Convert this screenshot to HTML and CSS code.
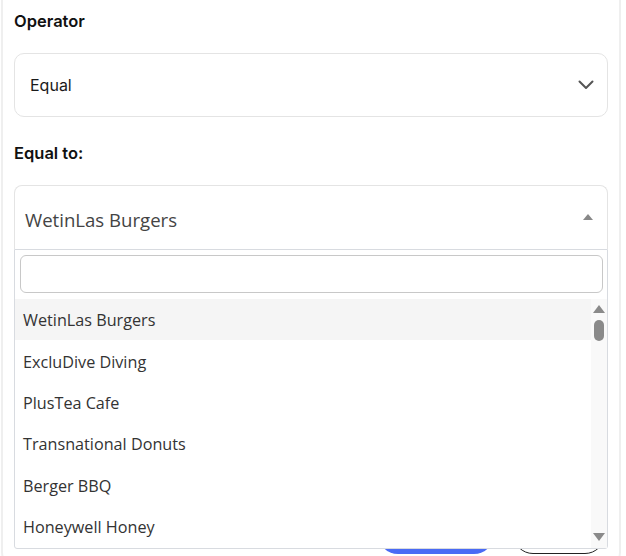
FILE: index.html
```html
<!DOCTYPE html>
<html>
<head>
<meta charset="utf-8">
<link rel="stylesheet" href="styles.css">
</head>
<body>
<div class="card">
  <div class="label">Operator</div>
  <div class="select">
    <span>Equal</span>
    <svg class="chev" width="16" height="10" viewBox="0 0 16 10"><path d="M1.5 1.5 L8 8 L14.5 1.5" fill="none" stroke="#555" stroke-width="2" stroke-linecap="round" stroke-linejoin="round"/></svg>
  </div>
  <div class="label label-2">Equal to:</div>
  <div class="combo">
    <div class="combo-box">
      <span>WetinLas Burgers</span>
      <span class="tri-up"></span>
    </div>
    <div class="dropdown">
      <div class="search-wrap"><input class="search" type="text"></div>
      <div class="list">
        <ul class="items">
          <li class="item active">WetinLas Burgers</li>
          <li class="item">ExcluDive Diving</li>
          <li class="item">PlusTea Cafe</li>
          <li class="item">Transnational Donuts</li>
          <li class="item">Berger BBQ</li>
          <li class="item">Honeywell Honey</li>
        </ul>
        <div class="scrollbar">
          <span class="sb-up"></span>
          <span class="sb-thumb"></span>
          <span class="sb-space"></span>
          <span class="sb-down"></span>
        </div>
      </div>
    </div>
  </div>
  <div class="actions">
    <button class="btn btn-primary">Apply</button>
    <button class="btn btn-outline">Cancel</button>
  </div>
</div>
</body>
</html>
```
FILE: styles.css
```css
* { box-sizing: border-box; }
html, body { margin: 0; padding: 0; background: #fff; }
body { font-family: Inter, "Liberation Sans", sans-serif; color: #111; }

.card {
  margin-left: 1px;
  width: 620px;
  border: 2px solid #efefef;
  border-top: 0;
  border-radius: 0 0 18px 18px;
  padding: 10px 11px 14px;
}

.label {
  font-size: 16.5px;
  font-weight: 600;
  line-height: 22px;
  color: #111;
}
.label-2 { margin-top: 25px; }

.select {
  margin-top: 21px;
  height: 64px;
  border: 1px solid #e4e4e4;
  border-radius: 10px;
  display: flex;
  align-items: center;
  justify-content: space-between;
  padding: 0 13px 0 15px;
  font-size: 16px;
  color: #1a1a1a;
}
.chev { display: block; }

.combo { margin-top: 21px; position: relative; }
.combo-box {
  height: 64px;
  border: 1px solid #e4e4e4;
  border-bottom: 0;
  border-radius: 8px 8px 0 0;
  display: flex;
  align-items: center;
  justify-content: space-between;
  padding: 3px 14px 0 10px;
  font-family: "Open Sans", "Noto Sans", sans-serif;
  font-size: 18.6px;
  color: #444;
}
.tri-up {
  width: 0; height: 0;
  border-left: 5px solid transparent;
  border-right: 5px solid transparent;
  border-bottom: 6px solid #888;
  margin-top: -4px;
}

.dropdown {
  position: absolute;
  left: 0; right: 0;
  top: 100%;
  z-index: 5;
  background: #fff;
  border: 1px solid #d8dbe0;
  border-radius: 0 0 3px 3px;
}
.search-wrap { padding: 5px 4px 6px 5px; }
.search {
  display: block;
  width: 100%;
  height: 38px;
  border: 1px solid #c8c8c8;
  border-radius: 6px;
  outline: none;
  background: #fff;
}
.list {
  display: flex;
  height: 249px;
  overflow: hidden;
}
.items {
  list-style: none;
  margin: 0; padding: 0;
  flex: 1;
}
.item {
  height: 41.4px;
  display: flex;
  align-items: center;
  padding-left: 8px;
  padding-top: 1px;
  font-family: "Open Sans", "Noto Sans", sans-serif;
  font-size: 16.2px;
  color: #333;
}
.item.active { background: #f5f5f5; }

.scrollbar {
  width: 16px;
  background: #f9f9f9;
  display: flex;
  flex-direction: column;
  align-items: center;
  padding: 6px 0 7px;
}
.sb-up {
  width: 0; height: 0;
  border-left: 6px solid transparent;
  border-right: 6px solid transparent;
  border-bottom: 8px solid #8a8a8a;
}
.sb-thumb {
  margin-top: 7px;
  width: 10px;
  height: 21px;
  border-radius: 5px;
  background: #8a8a8a;
}
.sb-space { flex: 1; }
.sb-down {
  width: 0; height: 0;
  border-left: 6px solid transparent;
  border-right: 6px solid transparent;
  border-top: 8px solid #8a8a8a;
}

.actions {
  margin-top: 265px;
  display: flex;
  justify-content: flex-end;
  gap: 19px;
  padding-right: 3px;
}
.btn {
  height: 40px;
  border-radius: 20px;
  font-family: Inter, sans-serif;
  font-size: 15px;
  font-weight: 600;
}
.btn-primary {
  width: 116px;
  background: #4a6bf5;
  color: #fff;
  border: 0;
}
.btn-outline {
  width: 92px;
  background: #fff;
  color: #111;
  border: 1.5px solid #222;
}
```
